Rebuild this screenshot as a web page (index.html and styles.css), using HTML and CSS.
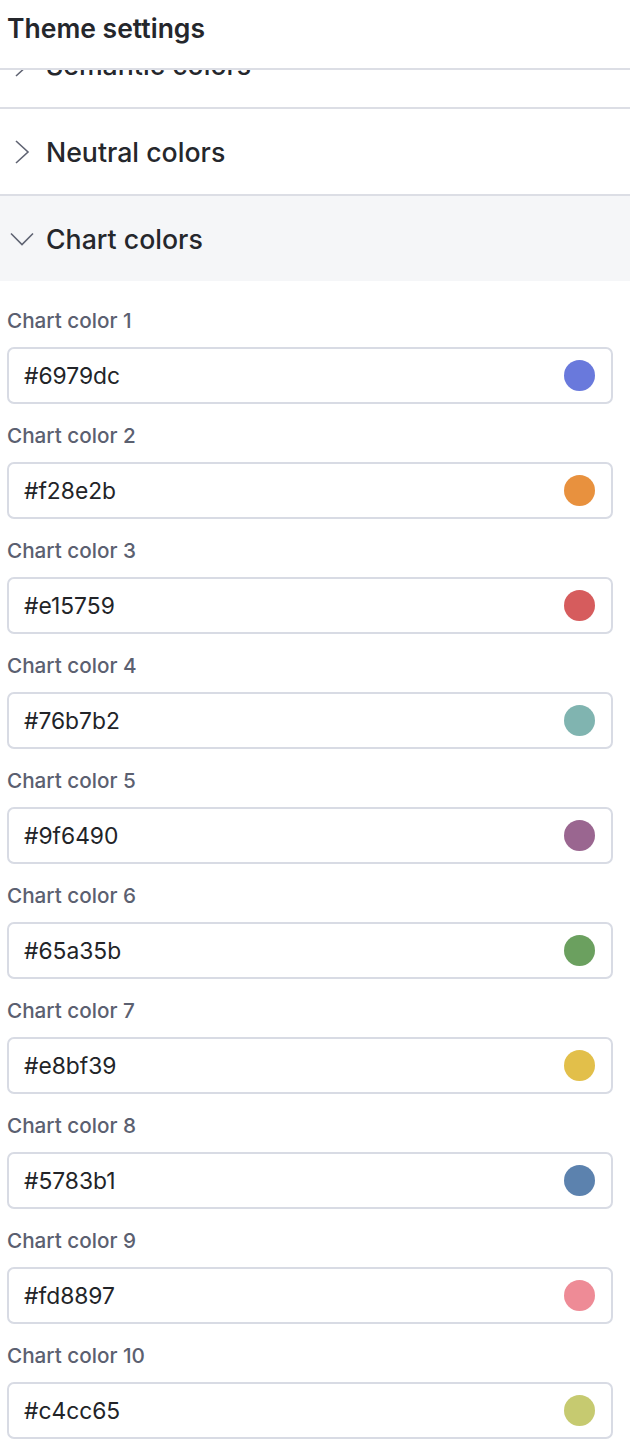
FILE: index.html
```html
<!DOCTYPE html>
<html>
<head>
<meta charset="utf-8">
<link rel="stylesheet" href="styles.css">
</head>
<body>
<header class="topbar"><h1 class="title">Theme settings</h1></header>
<main class="panel">
  <section class="acc">
    <div class="acc-head">
      <svg class="chev" viewBox="0 0 22 22"><polyline points="5,0 17,11 5,22"/></svg>
      <span>Semantic colors</span>
    </div>
  </section>
  <section class="acc">
    <div class="acc-head">
      <svg class="chev" viewBox="0 0 22 22"><polyline points="5,0 17,11 5,22"/></svg>
      <span>Neutral colors</span>
    </div>
  </section>
  <section class="acc open">
    <div class="acc-head">
      <svg class="chev" viewBox="0 0 22 22"><polyline points="0,5.5 11,16.5 22,5.5"/></svg>
      <span>Chart colors</span>
    </div>
    <div class="fields">
      <div class="field"><label class="lbl">Chart color 1</label><div class="box"><span class="val">#6979dc</span><span class="dot" style="background:#6979dc"></span></div></div>
      <div class="field"><label class="lbl">Chart color 2</label><div class="box"><span class="val">#f28e2b</span><span class="dot" style="background:#e8913e"></span></div></div>
      <div class="field"><label class="lbl">Chart color 3</label><div class="box"><span class="val">#e15759</span><span class="dot" style="background:#d65c5d"></span></div></div>
      <div class="field"><label class="lbl">Chart color 4</label><div class="box"><span class="val">#76b7b2</span><span class="dot" style="background:#80b4b0"></span></div></div>
      <div class="field"><label class="lbl">Chart color 5</label><div class="box"><span class="val">#9f6490</span><span class="dot" style="background:#9a6690"></span></div></div>
      <div class="field"><label class="lbl">Chart color 6</label><div class="box"><span class="val">#65a35b</span><span class="dot" style="background:#6ba05f"></span></div></div>
      <div class="field"><label class="lbl">Chart color 7</label><div class="box"><span class="val">#e8bf39</span><span class="dot" style="background:#e2bf4a"></span></div></div>
      <div class="field"><label class="lbl">Chart color 8</label><div class="box"><span class="val">#5783b1</span><span class="dot" style="background:#5c82ae"></span></div></div>
      <div class="field"><label class="lbl">Chart color 9</label><div class="box"><span class="val">#fd8897</span><span class="dot" style="background:#ee8b96"></span></div></div>
      <div class="field"><label class="lbl">Chart color 10</label><div class="box"><span class="val">#c4cc65</span><span class="dot" style="background:#c6ca70"></span></div></div>
    </div>
  </section>
</main>
</body>
</html>
```
FILE: styles.css
```css
* { box-sizing: border-box; }
html, body { margin: 0; padding: 0; background: #fff; }
body {
  font-family: Inter, "Noto Sans", "Liberation Sans", sans-serif;
  color: #24262b;
  width: 630px;
}
.topbar {
  position: fixed;
  top: 0; left: 0;
  width: 630px;
  height: 70px;
  background: #fff;
  border-bottom: 2px solid #dcdee5;
  z-index: 2;
  padding: 11px 7px 0;
}
.title {
  margin: 0;
  font-size: 26.5px;
  font-weight: 600;
  line-height: 34px;
  color: #25272c;
}
.panel { padding-top: 22px; }
.acc { border-bottom: 2px solid #dcdee5; }
.acc.open { border-bottom: none; }
.acc-head {
  height: 85px;
  display: flex;
  align-items: center;
  padding-left: 11px;
  gap: 13px;
  font-size: 26.7px;
  font-weight: 500;
  color: #25272c;
}
.acc.open .acc-head { background: #f5f6f8; }
.chev {
  width: 22px; height: 22px;
  fill: none;
  stroke: #5f6372;
  stroke-width: 1.6;
  overflow: visible;
}
.fields {
  padding: 27px 17px 0 7px;
  display: flex;
  flex-direction: column;
  gap: 19px;
}
.field { display: flex; flex-direction: column; gap: 13px; }
.lbl {
  font-size: 20.7px;
  line-height: 26px;
  font-weight: 500;
  color: #5b6070;
}
.box {
  height: 57px;
  border: 2px solid #d8dbe4;
  border-radius: 7px;
  display: flex;
  align-items: center;
  justify-content: space-between;
  padding: 0 16px 0 15px;
}
.val { font-size: 22.8px; color: #222428; }
.dot { width: 31px; height: 31px; border-radius: 50%; }
```
